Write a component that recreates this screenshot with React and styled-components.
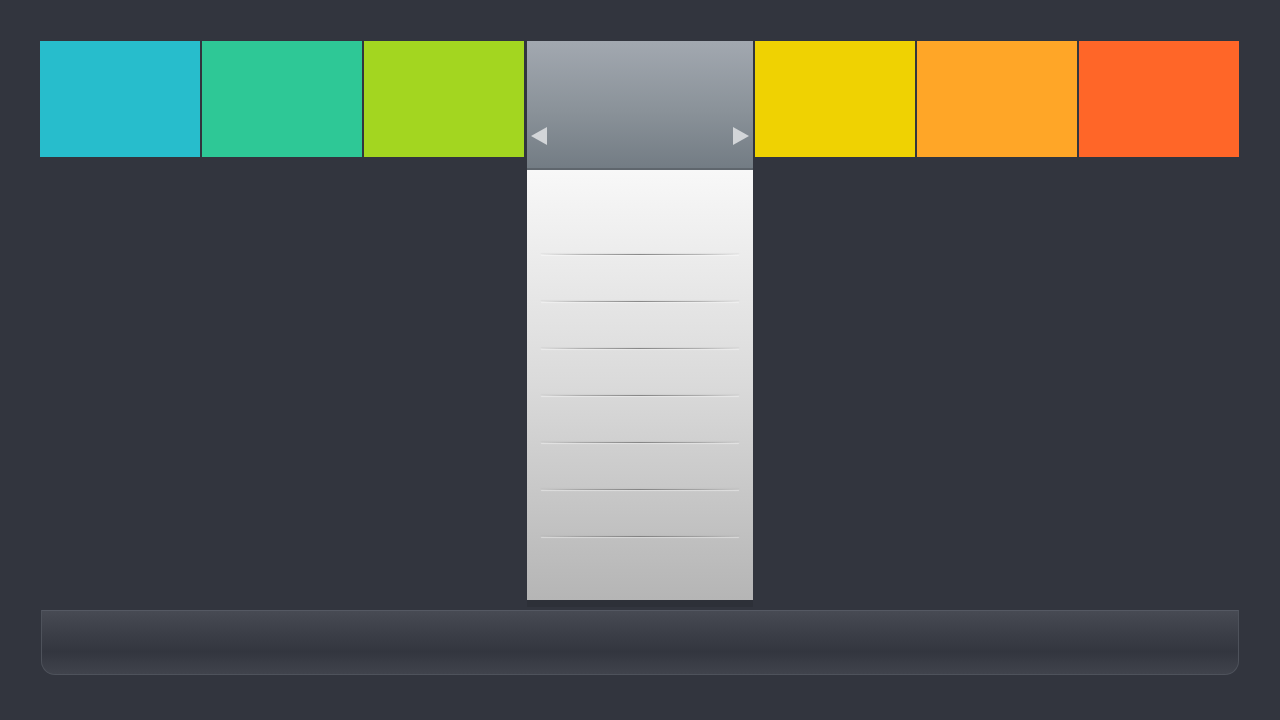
import React from 'react';
import styled, { createGlobalStyle } from 'styled-components';

const GlobalStyle = createGlobalStyle`
    *, *::before, *::after {
        box-sizing: border-box;
    }
    html, body {
        margin: 0;
        padding: 0;
        background: #32353e;
        font-family: 'Liberation Sans', Arial, sans-serif;
    }
`;

const Page = styled.div`
    width: 1280px;
    height: 720px;
    padding: 41px 40px 0 40px;
    display: flex;
    flex-direction: column;
`;

const TileRow = styled.div`
    display: flex;
    align-items: flex-start;
    gap: 2px;
`;

const Tile = styled.div`
    width: 160px;
    height: 116px;
    background: ${(p) => p.color};
`;

const Picker = styled.div`
    width: 226px;
    margin-left: 1px;
    display: flex;
    flex-direction: column;
    background: #2d3038;
    padding-bottom: 7px;
`;

const PickerHead = styled.div`
    height: 129px;
    background: linear-gradient(to bottom, #a2a8b0 0%, #8a9299 55%, #737c84 100%);
    border-bottom: 2px solid #5f666d;
    display: flex;
    align-items: flex-end;
    justify-content: space-between;
    padding: 0 4px 23px 4px;
`;

const Arrow = styled.div`
    width: 0;
    height: 0;
    border-top: 9px solid transparent;
    border-bottom: 9px solid transparent;
    ${(p) =>
        p.dir === 'left'
            ? 'border-right: 16px solid #d2d5d8;'
            : 'border-left: 16px solid #d2d5d8;'}
`;

const PickerBody = styled.div`
    height: 430px;
    padding: 38px 0 0 0;
    background: linear-gradient(to bottom, #f8f8f8 0%, #dadada 50%, #b5b5b5 100%);
`;

const Row = styled.div`
    height: 47px;
    position: relative;
    &::after {
        content: '';
        display: ${(p) => (p.last ? 'none' : 'block')};
        position: absolute;
        left: 14px;
        right: 14px;
        bottom: 0;
        height: 1px;
        background: linear-gradient(
            to right,
            rgba(130, 130, 130, 0) 0%,
            rgba(130, 130, 130, 0.5) 20%,
            rgba(120, 120, 120, 0.85) 50%,
            rgba(130, 130, 130, 0.5) 80%,
            rgba(130, 130, 130, 0) 100%
        );
        box-shadow: 0 1px 1px rgba(255, 255, 255, 0.45), 0 -1px 1px rgba(160, 160, 160, 0.15);
    }
`;

const Bar = styled.div`
    margin: 3px 0 0 1px;
    width: 1198px;
    height: 65px;
    border: 1px solid #4e525b;
    border-top-color: #555963;
    border-radius: 0 0 14px 14px;
    background: linear-gradient(to bottom, #474a53 0%, #3a3d46 40%, #33363f 65%, #40434c 100%);
`;

const tilesLeft = ['#27bdcc', '#2ec896', '#a3d620'];
const tilesRight = ['#efd202', '#ffa627', '#ff6628'];

const App = () => {
    return (
        <Page>
            <GlobalStyle />
            <TileRow>
                {tilesLeft.map((c) => (
                    <Tile key={c} color={c} />
                ))}
                <Picker>
                    <PickerHead>
                        <Arrow dir="left" />
                        <Arrow dir="right" />
                    </PickerHead>
                    <PickerBody>
                        {[0, 1, 2, 3, 4, 5, 6, 7].map((i) => (
                            <Row key={i} last={i === 7} />
                        ))}
                    </PickerBody>
                </Picker>
                {tilesRight.map((c) => (
                    <Tile key={c} color={c} />
                ))}
            </TileRow>
            <Bar />
        </Page>
    );
};

export default App;
